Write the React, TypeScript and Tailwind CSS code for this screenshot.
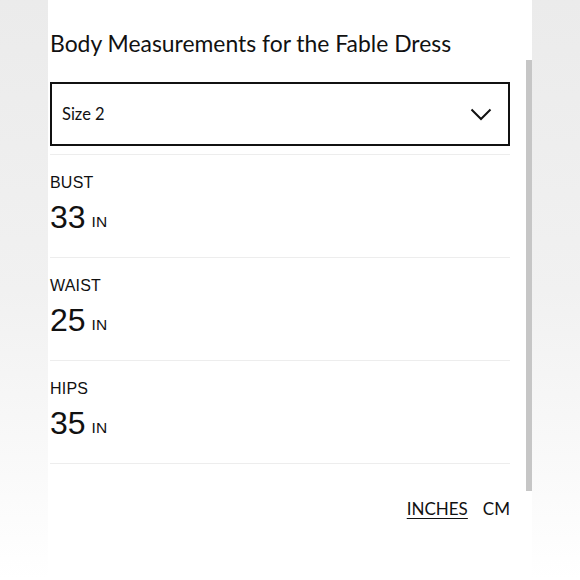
import React, { useState } from 'react';

const measurements = [
  { label: 'BUST', inches: 33, cm: 84 },
  { label: 'WAIST', inches: 25, cm: 64 },
  { label: 'HIPS', inches: 35, cm: 89 },
];

export default function App() {
  const [unit, setUnit] = useState<'in' | 'cm'>('in');

  return (
    <div className="w-[580px] h-[580px] flex bg-gradient-to-b from-[#ebebeb] via-[#f1f1f1] to-white overflow-hidden">
      <div className="relative ml-[48px] w-[484px] h-full bg-white pl-[2px] pr-[22px]">
        <h1 className="pt-[29px] text-[22.9px] leading-[28px] text-[#111] font-['Lato','Noto_Sans',sans-serif]">
          Body Measurements for the Fable Dress
        </h1>

        <div className="mt-[25px] h-[64px] border-2 border-[#111] flex items-center justify-between pl-[10px] pr-[16px]">
          <span className="text-[16.5px] text-[#111] font-['Lato','Noto_Sans',sans-serif]">Size 2</span>
          <svg width="22" height="14" viewBox="0 0 22 14" fill="none">
            <path d="M1.5 2.5 L11 12 L20.5 2.5" stroke="#111" strokeWidth="2" />
          </svg>
        </div>

        <div className="mt-[8px] border-t border-[#ededed]" />

        {measurements.map(m => (
          <div key={m.label} className="border-b border-[#ededed] h-[103px] pt-[19px] font-['Liberation_Sans',Arial,sans-serif] text-[#111]">
            <div className="text-[16px] leading-[18px] tracking-[0.2px]">{m.label}</div>
            <div className="mt-[7px] flex items-baseline gap-[6px]">
              <span className="text-[32px] leading-[36px]">{unit === 'in' ? m.inches : m.cm}</span>
              <span className="text-[15.5px] relative -top-[1px]">{unit === 'in' ? 'IN' : 'CM'}</span>
            </div>
          </div>
        ))}

        <div className="mt-[32px] flex justify-end gap-[15px] text-[17px] text-[#111] font-['Lato','Noto_Sans',sans-serif]">
          <button className={unit === 'in' ? 'underline underline-offset-[3px]' : ''} onClick={() => setUnit('in')}>INCHES</button>
          <button className={unit === 'cm' ? 'underline underline-offset-[3px]' : ''} onClick={() => setUnit('cm')}>CM</button>
        </div>

        <div className="absolute right-0 top-[60px] w-[6px] h-[431px] bg-[#c6c6c6]" />
      </div>
    </div>
  );
}
